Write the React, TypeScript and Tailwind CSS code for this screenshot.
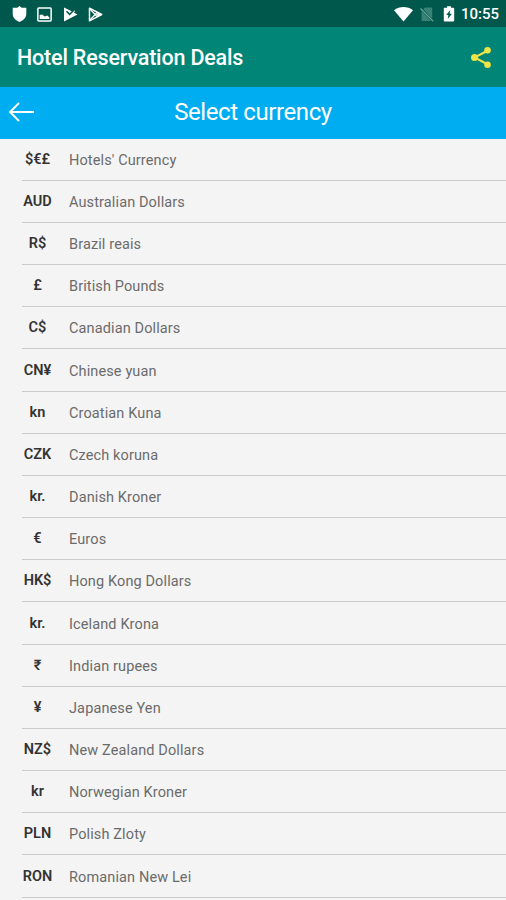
const currencies = [
  { symbol: "$€£", name: "Hotels' Currency" },
  { symbol: "AUD", name: "Australian Dollars" },
  { symbol: "R$", name: "Brazil reais" },
  { symbol: "£", name: "British Pounds" },
  { symbol: "C$", name: "Canadian Dollars" },
  { symbol: "CN¥", name: "Chinese yuan" },
  { symbol: "kn", name: "Croatian Kuna" },
  { symbol: "CZK", name: "Czech koruna" },
  { symbol: "kr.", name: "Danish Kroner" },
  { symbol: "€", name: "Euros" },
  { symbol: "HK$", name: "Hong Kong Dollars" },
  { symbol: "kr.", name: "Iceland Krona" },
  { symbol: "₹", name: "Indian rupees" },
  { symbol: "¥", name: "Japanese Yen" },
  { symbol: "NZ$", name: "New Zealand Dollars" },
  { symbol: "kr", name: "Norwegian Kroner" },
  { symbol: "PLN", name: "Polish Zloty" },
  { symbol: "RON", name: "Romanian New Lei" },
];

const StatusBar = () => {
  return (
    <div className="flex h-[27px] shrink-0 items-center justify-between bg-[#00574b] pl-3 pr-[7px] pt-px text-white">
      <div className="flex items-center gap-[10px]">
        <svg className="h-4 w-[15px]" viewBox="0 0 15 16" fill="currentColor">
          <path d="M7.5 0 9.800 1.800H14.300v6.200c0 3.600-2.800 6.400-6.800 8C3.500 14.400 0.700 11.600 0.700 8V1.800h4.500z" />
        </svg>
        <svg className="h-[15px] w-[15px]" viewBox="0 0 14 14">
          <rect x="0.800" y="1" width="12.400" height="12" rx="0.800" fill="none" stroke="currentColor" strokeWidth="1.400" />
          <path d="M2.500 11.200V7.500l2.300-.5 2.400 1.900L9.500 8l2 1.500v1.700z" fill="currentColor" />
        </svg>
        <svg className="ml-px h-[15px] w-[15px]" viewBox="0 0 15 15">
          <path d="M1 0.500 9 4.600 11 2.800 12.200 4 10.800 5.500 14.500 7.500 1 14.500z" fill="currentColor" />
          <path d="M3.500 4.300 6.600 7.400 11.500 2.400" fill="none" stroke="#00574b" strokeWidth="1.500" />
        </svg>
        <svg className="h-[15px] w-[15px]" viewBox="0 0 15 15" fill="none" stroke="currentColor">
          <path d="M1.500 1.200 13.700 7.500 1.500 13.800z" strokeWidth="1.500" strokeLinejoin="round" />
          <path d="M1.500 1.500 9.500 10M1.500 13.500 9.500 5" strokeWidth="1.200" />
          <path d="M8 7.500 10.500 5.500 13.500 7.500 10.500 9.500z" fill="currentColor" stroke="none" />
        </svg>
      </div>
      <div className="flex items-center">
        <svg className="h-4 w-[19px]" viewBox="0 0 19 16" fill="currentColor">
          <path d="M0 4.200C5.500-0.200 13.500-0.200 19 4.200L9.500 15.500z" />
        </svg>
        <svg className="ml-[7px] h-[15px] w-[14px] text-[#4e9085]" viewBox="0 0 14 15">
          <path d="M5 0.500h7.200v11.200L3.300 2.200zM1.600 4.200 11.200 14H1.600z" fill="currentColor" opacity="0.750" />
          <path d="M0.500 1.500 13.300 14.400" stroke="#6ba59b" strokeWidth="1.300" />
        </svg>
        <svg className="ml-[9px] h-4 w-3" viewBox="0 0 12 16">
          <path d="M4 0.300h4v1.500h2.200c.6 0 1 .4 1 1v11.700c0 .6-.4 1-1 1H1.800c-.6 0-1-.4-1-1V2.800c0-.6.4-1 1-1H4z" fill="currentColor" />
          <path d="M7.300 3.900 3.200 9h2.200l-.7 4L9 7.800H6.600z" fill="#00574b" />
        </svg>
        <span className="ml-[6px] w-[38px] whitespace-nowrap pt-px text-[15px] font-medium leading-none">10:55</span>
      </div>
    </div>
  );
};

const AppBar = () => {
  return (
    <header className="flex h-[60px] shrink-0 items-center justify-between bg-[#008577] pl-[17px] pr-[14px] text-white">
      <h1 className="pt-[2px] text-[21.500px] font-medium leading-none tracking-[-0.180px]">Hotel Reservation Deals</h1>
      <button type="button" aria-label="Share" className="text-[#f0e446]">
        <svg className="h-[23px] w-[22px]" viewBox="0 0 22 23">
          <path d="M18 4.500 4.500 11.500 18 18.500" fill="none" stroke="currentColor" strokeWidth="2" />
          <g fill="currentColor">
            <circle cx="17.500" cy="4.300" r="3.300" />
            <circle cx="4.500" cy="11.500" r="3.500" />
            <circle cx="17.500" cy="18.700" r="3.300" />
          </g>
        </svg>
      </button>
    </header>
  );
};

const SelectBar = () => {
  return (
    <div className="grid h-[51.500px] shrink-0 grid-cols-[50px_1fr_50px] items-center bg-[#00adf1] pb-[2px] text-white">
      <button type="button" aria-label="Back" className="pl-2">
        <svg className="h-5 w-[27px]" viewBox="0 0 27 20" fill="none" stroke="currentColor" strokeWidth="1.800">
          <path d="M26 10H2M11 1 2 10l9 9" />
        </svg>
      </button>
      <h2 className="text-center text-2xl leading-none tracking-[-0.400px]">Select currency</h2>
    </div>
  );
};

const App = () => {
  return (
    <div className="flex h-[900px] flex-col overflow-hidden bg-[#f4f4f4] font-['Roboto',sans-serif]">
      <StatusBar />
      <AppBar />
      <SelectBar />
      <ul className="pl-[22px]">
        {currencies.map((currency) => (
          <li key={currency.name} className="flex h-[42.180px] items-center border-b border-[#cbcbcb]">
            <span className="flex w-[31px] justify-center whitespace-nowrap pt-px text-[14.500px] font-semibold text-[#333]">{currency.symbol}</span>
            <span className="ml-4 pt-[3px] text-[14.500px] tracking-[0.120px] text-[#6b6b6b]">{currency.name}</span>
          </li>
        ))}
      </ul>
    </div>
  );
};

export default App;
